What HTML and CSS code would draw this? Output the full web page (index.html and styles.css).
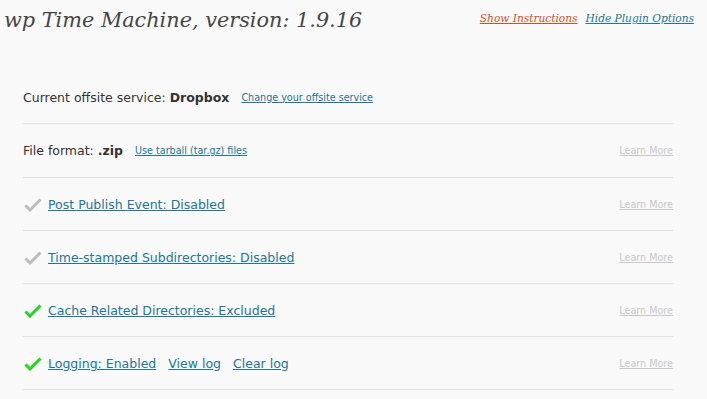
FILE: index.html
```html
<!DOCTYPE html>
<html>
<head>
<meta charset="utf-8">
<link rel="stylesheet" href="styles.css">
</head>
<body>
<div class="header">
  <h1 class="title">wp Time Machine, version: 1.9.16</h1>
  <div class="toplinks">
    <a href="#" class="orange">Show Instructions</a>
    <a href="#" class="blue">Hide Plugin Options</a>
  </div>
</div>
<div class="options">
  <div class="row">
    <span class="label">Current offsite service: <b>Dropbox</b></span>
    <a href="#" class="small">Change your offsite service</a>
  </div>
  <div class="row tall">
    <span class="label">File format: <b>.zip</b></span>
    <a href="#" class="small">Use tarball (tar.gz) files</a>
    <a href="#" class="learn">Learn More</a>
  </div>
  <div class="row">
    <svg class="check gray" width="18" height="14" viewBox="0 0 18 14"><path d="M1.5 7.5 L6 12 L16.5 1.5"/></svg>
    <a href="#" class="opt">Post Publish Event: Disabled</a>
    <a href="#" class="learn">Learn More</a>
  </div>
  <div class="row">
    <svg class="check gray" width="18" height="14" viewBox="0 0 18 14"><path d="M1.5 7.5 L6 12 L16.5 1.5"/></svg>
    <a href="#" class="opt">Time-stamped Subdirectories: Disabled</a>
    <a href="#" class="learn">Learn More</a>
  </div>
  <div class="row">
    <svg class="check green" width="18" height="14" viewBox="0 0 18 14"><path d="M1.5 7.5 L6 12 L16.5 1.5"/></svg>
    <a href="#" class="opt">Cache Related Directories: Excluded</a>
    <a href="#" class="learn">Learn More</a>
  </div>
  <div class="row">
    <svg class="check green" width="18" height="14" viewBox="0 0 18 14"><path d="M1.5 7.5 L6 12 L16.5 1.5"/></svg>
    <a href="#" class="opt">Logging: Enabled</a>
    <a href="#" class="opt">View log</a>
    <a href="#" class="opt">Clear log</a>
    <a href="#" class="learn">Learn More</a>
  </div>
</div>
</body>
</html>
```
FILE: styles.css
```css
html, body {
  margin: 0;
  padding: 0;
  background: #f9f9f9;
}
body {
  font-family: "DejaVu Sans", sans-serif;
  color: #333;
  width: 707px;
  height: 399px;
  overflow: hidden;
}
.header {
  display: flex;
  justify-content: space-between;
  align-items: flex-start;
  padding: 0 13px 0 4px;
}
.title {
  margin: 0;
  padding-top: 5px;
  font-family: "DejaVu Serif", serif;
  font-style: italic;
  font-weight: normal;
  font-size: 20.8px;
  color: #464646;
  line-height: 30px;
}
.toplinks {
  display: flex;
  gap: 8px;
  padding-top: 12px;
  font-family: "DejaVu Serif", serif;
  font-style: italic;
  font-size: 10.6px;
}
.toplinks a { text-decoration: underline; }
.orange { color: #d54e21; }
.blue { color: #21759b; }
.options {
  margin: 36px 34px 0 23px;
}
.row {
  display: flex;
  align-items: center;
  height: 52px;
  border-bottom: 1px solid #e3e3e3;
  font-size: 12.5px;
}
.row.tall { height: 53px; }
.label { color: #333; margin-right: 12px; }
.label b { font-weight: bold; }
.small {
  font-size: 9.6px;
  color: #21759b;
}
.opt {
  color: #21759b;
  font-size: 12.5px;
  margin-right: 12px;
}
.learn {
  margin-left: auto;
  font-size: 9.6px;
  color: #c8c8c8;
}
.check {
  margin: 2px 6px 0 1px;
  flex: none;
}
.check path {
  fill: none;
  stroke-width: 3;
  stroke-linecap: butt;
  stroke-linejoin: miter;
}
.check.gray path { stroke: #bdbdbd; }
.check.green path { stroke: #22d622; }
```
